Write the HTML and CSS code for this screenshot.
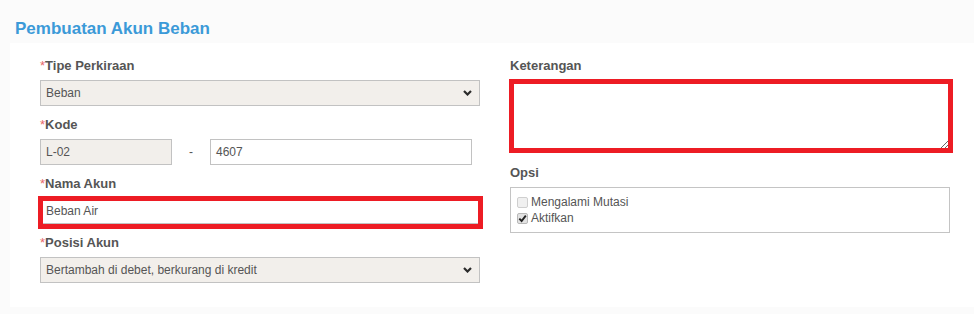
FILE: index.html
```html
<!DOCTYPE html>
<html lang="id">
<head>
<meta charset="utf-8">
<title>Pembuatan Akun Beban</title>
<link rel="stylesheet" href="styles.css">
</head>
<body>
<header class="page-head">
  <h1 class="page-title">Pembuatan Akun Beban</h1>
</header>
<main class="panel">
  <div class="col">
    <div class="field">
      <label class="lbl"><span class="req">*</span>Tipe Perkiraan</label>
      <div class="select">
        <span class="select-text">Beban</span>
        <svg class="chev" width="9" height="6" viewBox="0 0 9 6"><path d="M1 1 L4.5 4.5 L8 1" fill="none" stroke="#2b2b2b" stroke-width="2.2"/></svg>
      </div>
    </div>
    <div class="field">
      <label class="lbl"><span class="req">*</span>Kode</label>
      <div class="kode-row">
        <div class="input readonly">L-02</div>
        <span class="dash">-</span>
        <div class="input">4607</div>
      </div>
    </div>
    <div class="field">
      <label class="lbl"><span class="req">*</span>Nama Akun</label>
      <div class="mark-wrap">
        <div class="input">Beban Air</div>
        <span class="mark mark-nama"></span>
      </div>
    </div>
    <div class="field">
      <label class="lbl"><span class="req">*</span>Posisi Akun</label>
      <div class="select">
        <span class="select-text">Bertambah di debet, berkurang di kredit</span>
        <svg class="chev" width="9" height="6" viewBox="0 0 9 6"><path d="M1 1 L4.5 4.5 L8 1" fill="none" stroke="#2b2b2b" stroke-width="2.2"/></svg>
      </div>
    </div>
  </div>
  <div class="col">
    <div class="field field-wide">
      <label class="lbl">Keterangan</label>
      <div class="mark-wrap">
        <textarea class="textarea"></textarea>
        <span class="mark mark-ket"></span>
      </div>
    </div>
    <div class="field">
      <label class="lbl">Opsi</label>
      <div class="opsi">
        <div class="opt"><span class="cb"></span>Mengalami Mutasi</div>
        <div class="opt"><span class="cb checked"><svg width="9" height="9" viewBox="0 0 9 9"><path d="M1.3 4.6 L3.6 7 L7.8 1.6" fill="none" stroke="#222" stroke-width="1.9"/></svg></span>Aktifkan</div>
      </div>
    </div>
  </div>
</main>
</body>
</html>
```
FILE: styles.css
```css
html, body {
  margin: 0;
  padding: 0;
}
body {
  background: #fbfbfb;
  font-family: "Liberation Sans", Arial, sans-serif;
  color: #555;
  height: 314px;
  overflow: hidden;
}
.page-head {
  padding: 19px 0 4px 15px;
}
.page-title {
  margin: 0;
  font-size: 17px;
  line-height: 20px;
  font-weight: bold;
  color: #3b9ad8;
}
.panel {
  margin-left: 10px;
  background: #fff;
  height: 264px;
  box-sizing: border-box;
  padding: 15px 0 0 30px;
  display: grid;
  grid-template-columns: 440px 440px;
  column-gap: 30px;
  align-items: start;
}
.field {
  margin-bottom: 11px;
}
.field-wide {
  margin-bottom: 15px;
}
.lbl {
  display: block;
  font-size: 13px;
  line-height: 16px;
  font-weight: bold;
  color: #555;
  margin-bottom: 6px;
}
.req {
  color: #e8686a;
  font-weight: normal;
}
.select {
  height: 26px;
  box-sizing: border-box;
  border: 1px solid #c2c2c2;
  background: #f2efeb;
  display: flex;
  align-items: center;
  justify-content: space-between;
  padding: 0 7px 0 5px;
  font-size: 12px;
  color: #555;
}
.chev {
  display: block;
}
.kode-row {
  display: grid;
  grid-template-columns: 132px 38px 262px;
  align-items: center;
}
.dash {
  text-align: center;
  font-size: 12px;
  color: #555;
}
.input {
  height: 26px;
  box-sizing: border-box;
  border: 1px solid #c2c2c2;
  background: #fff;
  padding: 0 5px;
  font-size: 12px;
  line-height: 24px;
  color: #555;
}
.input.readonly {
  background: #f2efeb;
}
.mark-wrap {
  position: relative;
}
.mark {
  position: absolute;
  border: 5px solid #ed1c24;
  pointer-events: none;
}
.mark-nama {
  left: -2px;
  right: -3px;
  top: -2px;
  bottom: -5px;
}
.mark-ket {
  left: -1px;
  right: -3px;
  top: -1px;
  bottom: -3px;
}
.textarea {
  display: block;
  width: 440px;
  height: 70px;
  box-sizing: border-box;
  margin: 0;
  border: 1px solid #c2c2c2;
  background: #fff;
  font-family: "Liberation Sans", Arial, sans-serif;
  font-size: 12px;
}
.opsi {
  border: 1px solid #c4c4c4;
  padding: 6px 6px;
  height: 46px;
  box-sizing: border-box;
}
.opt {
  display: flex;
  align-items: center;
  height: 16px;
  font-size: 12px;
  color: #555;
}
.cb {
  width: 11px;
  height: 11px;
  box-sizing: border-box;
  border: 1px solid #cfcfcf;
  border-radius: 2px;
  background: #f0f0f0;
  margin-right: 3px;
  display: flex;
  align-items: center;
  justify-content: center;
}
.cb.checked {
  background: #e2e2e2;
  border-color: #b8b8b8;
}
.cb svg {
  display: block;
}
```
